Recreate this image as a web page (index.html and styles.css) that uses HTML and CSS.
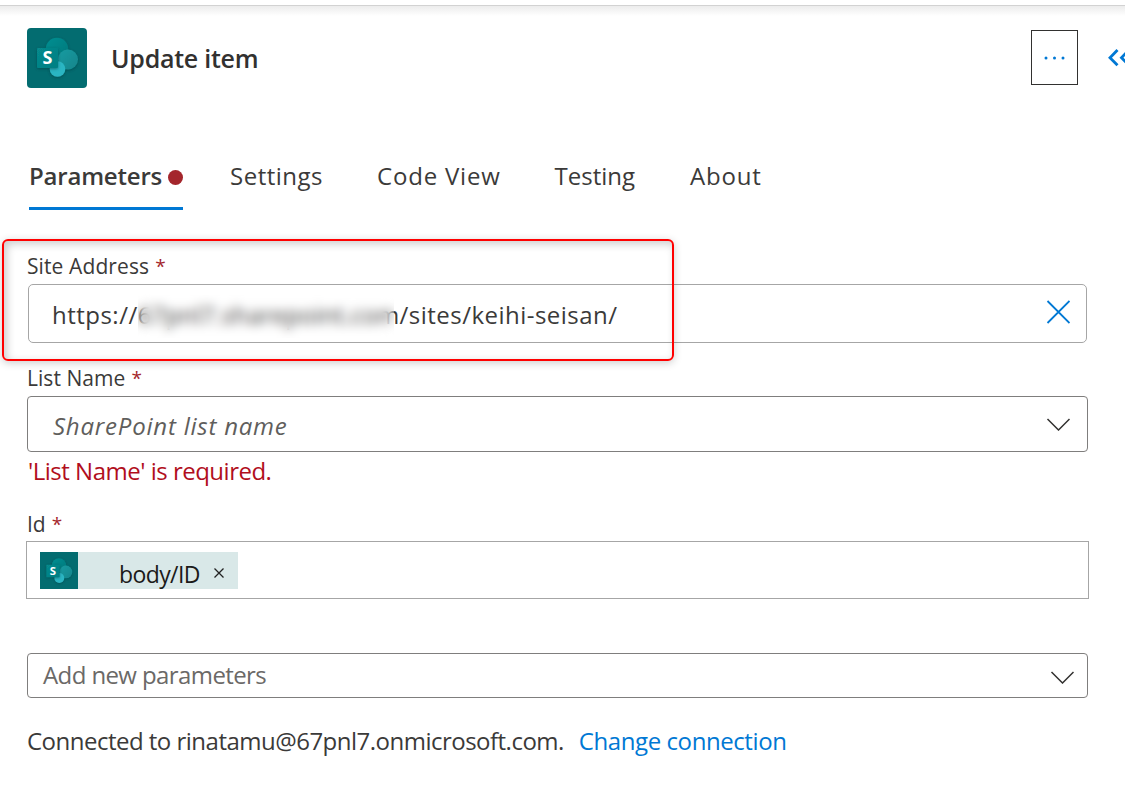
FILE: index.html
```html
<!DOCTYPE html>
<html lang="en">
<head>
<meta charset="utf-8">
<title>Update item</title>
<link rel="stylesheet" href="styles.css">
</head>
<body>
<svg width="0" height="0" class="defs" aria-hidden="true">
  <defs>
    <linearGradient id="g1" x1="0" y1="0" x2="1" y2="1"><stop offset="0" stop-color="#058f92"/><stop offset="1" stop-color="#03777a"/></linearGradient>
    <linearGradient id="g2" x1="0" y1="0" x2="1" y2="1"><stop offset="0" stop-color="#1a9ba1"/><stop offset="1" stop-color="#12858b"/></linearGradient>
    <linearGradient id="g3" x1="0" y1="0" x2="1" y2="1"><stop offset="0" stop-color="#07898c"/><stop offset="1" stop-color="#037f83"/></linearGradient>
    <filter id="sh" x="-30%" y="-30%" width="160%" height="160%"><feDropShadow dx="0" dy="1" stdDeviation="1.6" flood-color="#003a3d" flood-opacity=".55"/></filter>
    <symbol id="sharepoint" viewBox="0 0 60 60">
      <rect width="60" height="60" fill="#036c70"/>
      <g filter="url(#sh)">
        <circle cx="30" cy="21" r="11.2" fill="url(#g1)"/>
        <circle cx="41" cy="31.5" r="10" fill="url(#g2)"/>
        <circle cx="30.500" cy="41" r="7.800" fill="#2bb5c2"/>
      </g>
      <rect x="10" y="20" width="21" height="20" rx="1" fill="url(#g3)" filter="url(#sh)"/>
      <text x="20.500" y="36.200" text-anchor="middle" class="logo-letter">S</text>
    </symbol>
  </defs>
</svg>
<main class="panel">
  <header class="header">
    <svg class="logo"><use href="#sharepoint"/></svg>
    <h1 class="title">Update item</h1>
    <button class="more" aria-label="More">
      <svg width="24" height="6" fill="#0078d4"><circle cx="3" cy="3" r="1.500"/><circle cx="11.500" cy="3" r="1.500"/><circle cx="20" cy="3" r="1.500"/></svg>
    </button>
    <svg class="collapse" width="17" height="18" fill="none" stroke="#0078d4" stroke-width="2.800"><path d="M9.500 1 2 8.700 9.500 16.300M21 1 13.500 8.700 21 16.300"/></svg>
  </header>
  <nav class="tabs">
    <a class="tab active"><span class="t-par">Parameters</span><i class="dot"></i></a>
    <a class="tab"><span class="t-set">Settings</span></a>
    <a class="tab"><span class="t-code">Code View</span></a>
    <a class="tab"><span class="t-test">Testing</span></a>
    <a class="tab"><span class="t-about">About</span></a>
  </nav>
  <section class="site">
    <div class="label"><span class="l-site">Site Address</span><b class="star">*</b></div>
    <div class="site-input">
      <span class="url">https://<span class="host">67pnl7.sharepoint.com</span>/sites/keihi-seisan/</span>
      <svg class="clear" width="24" height="24" fill="none" stroke="#0078d4" stroke-width="1.800"><path d="M1.500 1 23.500 23M23.500 1 1.500 23"/></svg>
      <div class="mask"></div>
    </div>
    <div class="highlight"></div>
  </section>
  <section class="list">
    <div class="label"><span class="l-list">List Name</span><b class="star">*</b></div>
    <div class="list-input"><span class="placeholder">SharePoint list name</span>
      <svg width="24" height="13" fill="none" stroke="#323130" stroke-width="1.500"><path d="M1.500 1 12.500 12 23.500 1"/></svg>
    </div>
    <div class="error"><span class="e-text">'List Name' is required.</span></div>
  </section>
  <section class="id">
    <div class="label"><span class="l-id">Id</span><b class="star">*</b></div>
    <div class="id-input">
      <div class="token">
        <svg class="token-logo" viewBox="0 0 38 37"><use href="#sharepoint" width="38" height="38"/></svg>
        <span class="token-text">body/ID</span>
        <svg class="token-x" width="10" height="10" fill="none" stroke="#222" stroke-width="1.300"><path d="M.5.500 9.500 9.500M9.500.500.500 9.500"/></svg>
      </div>
    </div>
  </section>
  <div class="add-input"><span class="add-text">Add new parameters</span>
    <svg width="24" height="13" fill="none" stroke="#323130" stroke-width="1.500"><path d="M1.500 1 12.500 12 23.500 1"/></svg>
  </div>
  <footer class="footer"><span class="f-conn">Connected to rinatamu@67pnl7.onmicrosoft.com.</span><a class="f-link">Change connection</a></footer>
</main>
</body>
</html>
```
FILE: styles.css
```css
* { box-sizing: border-box; }
body { margin: 0; background: #fff; font-family: "Open Sans", "Noto Sans", sans-serif; font-size: 24px; color: #3b3a39; overflow: hidden; }
svg { display: block; flex: none; }
span { white-space: nowrap; }
.defs { position: absolute; }
.logo-letter { font: 700 18px "Open Sans", sans-serif; fill: #fff; }
.panel { width: 1125px; height: 807px; margin: 0; padding-top: 5px; overflow: hidden; }
.header { display: flex; height: 145px; padding: 22px 0 0 27px; border-top: 1px solid #d2d2d2; background: linear-gradient(#ececec, #fff 10px); align-items: flex-start; }
.logo { width: 60px; height: 60px; border-radius: 4px; }
.title { margin: 13px auto 0 24px; font-size: 25px; line-height: 34px; font-weight: 600; letter-spacing: -.25px; white-space: nowrap; color: #323130; }
.more { width: 47px; height: 55px; margin: 2px 30px 0 0; padding: 0; border: 1px solid #323130; background: #fff; display: flex; align-items: center; justify-content: center; }
.collapse { margin-top: 21px; }
.tabs { display: flex; height: 60px; padding-left: 29px; gap: 54px; line-height: 51px; }
.tab { display: flex; align-items: flex-start; height: 60px; }
.active { width: 154px; margin-right: -7px; border-bottom: 3px solid #0078d4; font-weight: 600; justify-content: space-between; }
.t-par { letter-spacing: -.2px; }
.t-set { letter-spacing: .5px; }
.t-code { letter-spacing: .8px; }
.t-test { letter-spacing: 0; }
.t-about { letter-spacing: .8px; margin-left: 1px; }
.dot { width: 15px; height: 15px; margin-top: 20px; border-radius: 50%; background: #a4262c; }
.label { display: flex; gap: 6px; font-size: 21px; line-height: 30px; padding-left: 27px; }
.l-site { letter-spacing: .1px; }
.l-list { letter-spacing: .05px; }
.star { font-weight: 400; font-size: 19px; color: #a4262c; }
.site { position: relative; height: 153px; padding-top: 41px; }
.site-input { position: relative; display: flex; align-items: center; width: 1059px; height: 59px; margin: 3px 0 0 28px; padding-left: 23px; border: 1px solid #a6a6a6; border-radius: 5px; }
.url { letter-spacing: .48px; padding-top: 2px; }
.host { letter-spacing: .15px; }
.mask { position: absolute; left: 109px; top: 8px; width: 256px; height: 45px; backdrop-filter: blur(5.5px); }
.clear { margin: 0 16px 3px auto; }
.highlight { position: absolute; left: 2px; top: 29px; width: 672px; height: 122px; border: 2px solid #f00; border-radius: 6px; box-shadow: 0 2px 8px rgba(0,0,0,.2), inset 3px 3px 8px rgba(0,0,0,.2); }
.list-input { display: flex; align-items: center; justify-content: space-between; width: 1061px; height: 56px; margin: 3px 0 0 27px; padding: 3px 17px 0 25px; border: 1px solid #7f7e7d; border-radius: 4px; }
.list-input svg { margin-bottom: 3px; }
.placeholder { font-style: italic; letter-spacing: .78px; color: #605e5c; }
.error { padding-left: 28px; height: 40px; line-height: 38px; letter-spacing: -.5px; color: #b10e1c; }
.id { padding-top: 17px; }
.id-input { width: 1063px; height: 58px; margin: 2px 0 0 26px; padding: 10px 13px; border: 1px solid #a6a6a6; }
.token { display: flex; width: 198px; height: 37px; background: #d9e8e8; }
.token-logo { width: 38px; height: 37px; }
.token-text { margin-left: 41px; line-height: 45px; font-size: 23px; letter-spacing: -.6px; color: #1b1a19; }
.token-x { margin: 16px 14px 0 auto; }
.add-input { display: flex; align-items: center; justify-content: space-between; width: 1061px; height: 45px; margin: 54px 0 0 27px; padding: 0 13px 0 15px; border: 1px solid #7f7e7d; border-radius: 4px; color: #6b6967; }
.add-text { letter-spacing: -.6px; padding-bottom: 3px; }
.add-input svg { margin-top: 4px; }
.footer { display: flex; gap: 15px; padding: 25px 0 0 27px; line-height: 36px; }
.f-conn { letter-spacing: -.51px; }
.f-link { color: #0078d4; letter-spacing: -.42px; white-space: nowrap; }
```
